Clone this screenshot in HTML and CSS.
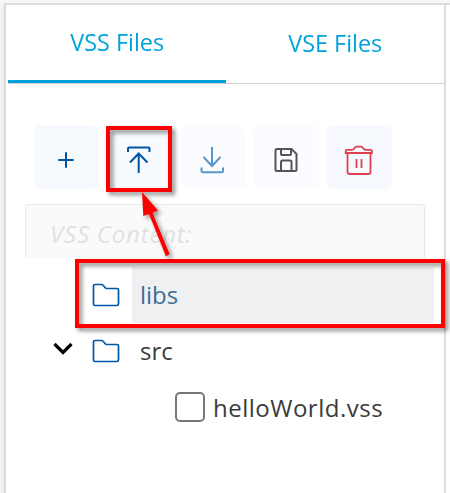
FILE: index.html
```html
<!DOCTYPE html>
<html lang="en">
<head>
<meta charset="utf-8">
<title>VSS Files</title>
<link rel="stylesheet" href="styles.css">
</head>
<body>
<div class="window">
<main class="panel">
  <nav class="tabs">
    <a class="tab active"><span class="tab-label">VSS Files</span></a>
    <a class="tab"><span class="tab-label">VSE Files</span></a>
  </nav>
  <div class="toolbar">
    <button class="tool" aria-label="Add"><svg viewBox="0 0 65 64"><path class="blue" d="M24.300 35H39.700M32 27.300V42.700"/></svg></button>
    <button class="tool" aria-label="Upload"><svg viewBox="0 0 65 64"><path class="blue" d="M21 27v-3.500q0-1 1-1h19.500q1 0 1 1V27M31.700 48V28.500M23 37.500L31.700 28.500l8.700 9"/></svg></button>
    <button class="tool muted" aria-label="Download"><svg viewBox="0 0 65 64"><path class="pale" d="M31 22v19M22.500 32L31 41l8.500-9M20.500 42.500v3.500q0 1.300 1.500 1.300h18.500q1.500 0 1.500-1.300v-3.500"/></svg></button>
    <button class="tool muted" aria-label="Save"><svg viewBox="0 0 65 64"><path class="gray" d="M21.500 25.500q0-1.500 1.500-1.500h14.500l5 5v15.500q0 1.500-1.500 1.500h-18q-1.500 0-1.500-1.500zM27 24v5q0 1 1 1h8q1 0 1-1v-5M27 46v-9q0-1.500 1.500-1.500H36q1.500 0 1.500 1.500v9"/></svg></button>
    <button class="tool" aria-label="Delete"><svg viewBox="0 0 65 64"><path class="red" d="M18.700 28v-2q0-1.200 1.200-1.200h5q1.500 0 2.500-1.600t2.400-1.600h4q1.400 0 2.400 1.600t2.500 1.600h5q1.200 0 1.200 1.200v2zM20.500 28.500v18.200q0 2.300 2.300 2.300h18.400q2.300 0 2.300-2.300V28.500M29.500 34v9M34.500 34v9"/></svg></button>
  </div>
  <div class="field"><span class="placeholder">VSS Content:</span></div>
  <div class="tree">
    <div class="row">
      <span class="chevron"></span>
      <svg class="folder" viewBox="0 0 28 24"><path d="M1.500 3q0-1.500 1.500-1.500h6.500q1 0 1.800 1l1.700 2q.8 1 2 1H25q1.500 0 1.500 1.500V21q0 1.500-1.500 1.500H3Q1.500 22.500 1.500 21z"/></svg>
      <div class="name selected">libs</div>
    </div>
    <div class="row">
      <svg class="chevron" viewBox="0 0 20 14"><path d="M1.500 2L10 10.500 18.500 2"/></svg>
      <svg class="folder" viewBox="0 0 28 24"><path d="M1.500 3q0-1.500 1.500-1.500h6.500q1 0 1.800 1l1.700 2q.8 1 2 1H25q1.500 0 1.500 1.500V21q0 1.500-1.500 1.500H3Q1.500 22.500 1.500 21z"/></svg>
      <div class="name">src</div>
    </div>
    <div class="row file">
      <span class="checkbox"></span>
      <span class="filename">helloWorld.vss</span>
    </div>
  </div>
</main>
</div>
<div class="highlight upload-highlight"></div>
<div class="highlight row-highlight"></div>
<svg class="arrow" viewBox="0 0 50 75"><path d="M8 0L24 18.500l-5.500 2.300L35.500 62l-3.500 2.500L15 22 9.300 24z"/></svg>
</body>
</html>
```
FILE: styles.css
```css
* { box-sizing: border-box; }
body {
  margin: 0;
  width: 450px;
  height: 493px;
  padding: 3px 0 0 4px;
  overflow: hidden;
  position: relative;
  background: #f7f7f7;
  font-family: "Open Sans", "Noto Sans", sans-serif;
  font-size: 24px;
  font-weight: 400;
  color: #3b3b3b;
}
.window {
  width: 446px;
  height: 490px;
  border: 2px solid #dcdcdc;
  border-right: 0;
  border-bottom: 0;
  background: #fff;
  box-shadow: 0 3px 5px rgba(0,0,0,.12);
}
.panel {
  width: 440px;
  height: 488px;
  border-right: 2px solid #dcdcdc;
}
.tabs {
  display: flex;
  height: 79px;
  margin-left: 2px;
  border-bottom: 1px solid #d0d0d0;
}
.tab {
  width: 218px;
  height: 78px;
  display: flex;
  justify-content: center;
  color: #00a3db;
  line-height: 32px;
  padding-top: 22px;
}
.active { border-bottom: 3px solid #00a3db; padding-top: 21px; }
.tab-label { white-space: nowrap; transform: scaleX(.975); }
.toolbar {
  display: flex;
  gap: 8px;
  margin: 41px 0 0 28px;
}
.tool {
  width: 65.300px;
  height: 64px;
  padding: 0;
  border: 0;
  border-radius: 6px;
  background: #f6faff;
}
.muted { background: #fbfcff; }
.tool svg { display: block; width: 65px; height: 64px; fill: none; stroke-width: 2; }
.blue { stroke: #0055a0; }
.pale { stroke: #5b94c8; }
.gray { stroke: #555; }
.red { stroke: #df3f4e; stroke-width: 1.800; }
.field {
  width: 400px;
  height: 54px;
  margin: 15px 0 0 19px;
  padding: 14px 0 0 24px;
  border: 1px solid #e8e8e8;
  border-bottom: 0;
  border-radius: 4px 4px 0 0;
  background: #fafafa;
  line-height: 30px;
}
.placeholder {
  display: inline-block;
  font-style: italic;
  color: #e1e1e1;
  letter-spacing: .8px;
}
.tree { margin-top: 9px; }
.row { display: flex; height: 56px; align-items: center; }
.chevron { width: 20px; height: 14px; margin: -5px 30px 0 46.500px; }
.chevron path { fill: none; stroke: #000; stroke-width: 3.200; }
.folder { width: 28px; height: 24px; margin-right: 12.500px; margin-left: -11px; }
.folder path { fill: none; stroke: #0057a8; stroke-width: 1.700; }
.name { flex: 0 0 302px; height: 56px; padding-left: 8px; line-height: 55px; }
.selected { background: #eff0f2; color: #3e6b98; }
.filename { white-space: nowrap; letter-spacing: .5px; }
.file { padding-left: 169px; }
.checkbox { width: 30px; height: 30px; border: 2px solid #777; border-radius: 5px; margin-right: 8px; }
.highlight { position: absolute; border: 4px solid #f00; filter: drop-shadow(3px 3px 2px rgba(0,0,0,.45)); }
.upload-highlight { left: 106px; top: 126px; width: 66px; height: 66px; }
.row-highlight { left: 75px; top: 259px; width: 370px; height: 69px; }
.arrow { position: absolute; left: 134px; top: 192px; width: 50px; height: 75px; filter: drop-shadow(3px 3px 2px rgba(0,0,0,.4)); }
.arrow path { fill: #f00; }
```
